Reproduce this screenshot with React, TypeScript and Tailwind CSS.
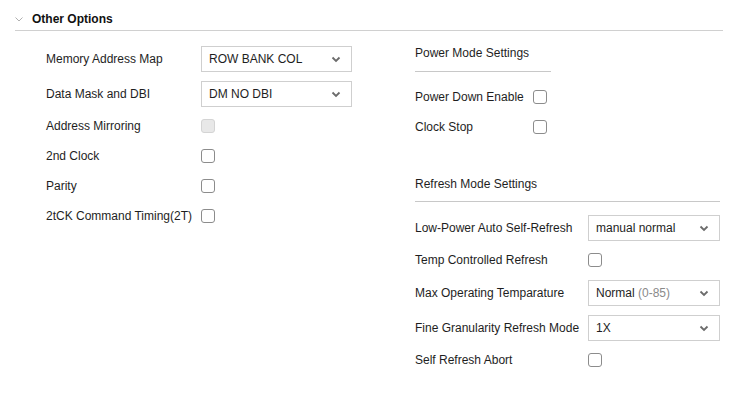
import React from "react";

const font = { fontFamily: '"Liberation Sans", Arial, sans-serif' };

function Chevron() {
  return (
    <svg width="10" height="7" viewBox="0 0 10 7" className="shrink-0">
      <path d="M1.5 1.5 L5 5 L8.5 1.5" fill="none" stroke="#6b6b6b" strokeWidth="1.8" />
    </svg>
  );
}

function Select({ width, children }: { width: string; children: React.ReactNode }) {
  return (
    <div
      className={`${width} h-[26px] flex items-center justify-between pl-[7px] pr-[10px] border border-[#cfcfcf] bg-white text-[12px] text-[#1e1e1e]`}
    >
      <span>{children}</span>
      <Chevron />
    </div>
  );
}

function Checkbox({ disabled = false }: { disabled?: boolean }) {
  return (
    <div
      className={
        disabled
          ? "w-[14px] h-[14px] rounded-[3px] border border-[#d4d4d4] bg-[#e8e8e8]"
          : "w-[14px] h-[14px] rounded-[3px] border border-[#8c8c8c] bg-white"
      }
    />
  );
}

function SectionTitle({
  children,
  line,
  mt,
  gap,
}: {
  children: React.ReactNode;
  line: string;
  mt: string;
  gap: string;
}) {
  return (
    <div className={mt}>
      <div className="h-[14px] leading-[14px] text-[12px] text-[#1e1e1e]">{children}</div>
      <div className={`${line} ${gap} h-px bg-[#c8c8c8]`} />
    </div>
  );
}

export default function App() {
  return (
    <div className="w-[752px] h-[403px] bg-white text-[#1e1e1e]" style={font}>
      {/* Header */}
      <div className="h-[30px] flex items-center pt-[8px]">
        <svg width="8" height="5" viewBox="0 0 8 5" className="ml-[15px] mr-[9px]">
          <path d="M0.5 0.5 L4 4 L7.5 0.5" fill="none" stroke="#b0b0b0" strokeWidth="1" />
        </svg>
        <span className="text-[12px] font-bold text-[#111]">Other Options</span>
      </div>
      <div className="ml-[15px] mr-[29px] h-px bg-[#d0d0d0]" />

      <div className="flex">
        {/* Left column */}
        <div className="w-[415px] pl-[46px] pt-[15px] text-[12px]">
          <div className="flex items-center h-[26px]">
            <span className="w-[155px]">Memory Address Map</span>
            <Select width="w-[151px]">ROW BANK COL</Select>
          </div>
          <div className="flex items-center h-[26px] mt-[9px]">
            <span className="w-[155px]">Data Mask and DBI</span>
            <Select width="w-[151px]">DM NO DBI</Select>
          </div>
          <div className="mt-[4px]">
            <div className="flex items-center h-[30px]">
              <span className="w-[155px]">Address Mirroring</span>
              <Checkbox disabled />
            </div>
            <div className="flex items-center h-[30px]">
              <span className="w-[155px]">2nd Clock</span>
              <Checkbox />
            </div>
            <div className="flex items-center h-[30px]">
              <span className="w-[155px]">Parity</span>
              <Checkbox />
            </div>
            <div className="flex items-center h-[30px]">
              <span className="w-[155px]">2tCK Command Timing(2T)</span>
              <Checkbox />
            </div>
          </div>
        </div>

        {/* Right column */}
        <div className="w-[305px] text-[12px]">
          <SectionTitle mt="mt-[15px]" gap="mt-[11px]" line="w-[136px]">
            Power Mode Settings
          </SectionTitle>
          <div className="mt-[10px]">
            <div className="flex items-center h-[30px]">
              <span className="w-[118px]">Power Down Enable</span>
              <Checkbox />
            </div>
            <div className="flex items-center h-[30px]">
              <span className="w-[118px]">Clock Stop</span>
              <Checkbox />
            </div>
          </div>

          <SectionTitle mt="mt-[35px]" gap="mt-[10px]" line="w-[305px]">
            Refresh Mode Settings
          </SectionTitle>
          <div className="flex items-center h-[26px] mt-[13px]">
            <span className="w-[173px]">Low-Power Auto Self-Refresh</span>
            <Select width="w-[132px]">manual normal</Select>
          </div>
          <div className="flex items-center h-[30px] mt-[4px]">
            <span className="w-[173px]">Temp Controlled Refresh</span>
            <Checkbox />
          </div>
          <div className="flex items-center h-[26px] mt-[5px]">
            <span className="w-[173px]">Max Operating Temparature</span>
            <Select width="w-[132px]">
              Normal <span className="text-[#8a8a8a]">(0-85)</span>
            </Select>
          </div>
          <div className="flex items-center h-[26px] mt-[9px]">
            <span className="w-[173px]">Fine Granularity Refresh Mode</span>
            <Select width="w-[132px]">1X</Select>
          </div>
          <div className="flex items-center h-[30px] mt-[4px]">
            <span className="w-[173px]">Self Refresh Abort</span>
            <Checkbox />
          </div>
        </div>
      </div>
    </div>
  );
}
